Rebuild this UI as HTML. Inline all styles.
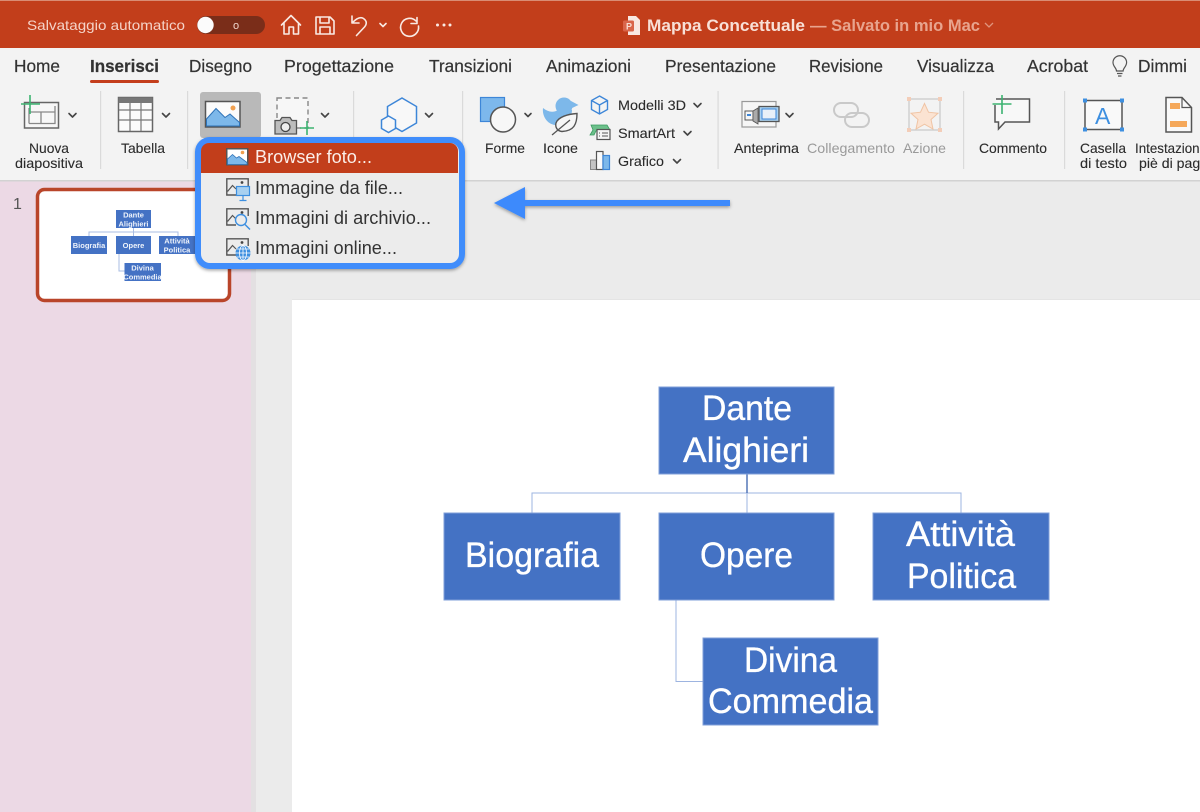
<!DOCTYPE html>
<html lang="it"><head><meta charset="utf-8"><title>Mappa Concettuale</title>
<style>
html,body{margin:0;padding:0;width:1200px;height:812px;overflow:hidden;background:#ebebeb}
svg{display:block;position:absolute;left:0;top:0;filter:blur(.3px)}
text{font-family:"Liberation Sans",sans-serif;fill:#2a2a2a}
.tab{font-size:17.5px;fill:#333;stroke:#333;stroke-width:.2px}
.lb{font-size:13.6px;fill:#2b2b2b;stroke:#2b2b2b;stroke-width:.1px}
.gr{font-size:13.6px;fill:#9a9a9a}
.mn{font-size:18px;fill:#333}
.sl{font-size:35px;fill:#fff;stroke:#fff;stroke-width:.35px}
.th{font-size:7.500px;fill:#eef3fb;font-weight:bold;text-anchor:middle}
.ch{fill:none;stroke:#444;stroke-width:1.600;stroke-linecap:round;stroke-linejoin:round}
.w{fill:none;stroke:#f9e9e3;stroke-width:1.600;stroke-linecap:round;stroke-linejoin:round}
.bl{fill:none;stroke:#3d86d8;stroke-width:1.500}
</style></head><body>
<svg width="1200" height="812" viewBox="0 0 1200 812" xmlns="http://www.w3.org/2000/svg">
<defs>
<filter id="sh" x="-10%" y="-20%" width="120%" height="140%"><feDropShadow dx="0" dy="1.500" stdDeviation="1.500" flood-color="#000" flood-opacity=".35"/></filter>
<g id="pic"><rect x=".75" y=".75" width="21" height="16" fill="#fff" stroke="#555" stroke-width="1.500"/><path d="M1.500 16.500V11l5-4.500 4 3.500 2.500-1.500 8 6v2z" fill="#7db8ea" stroke="#2f73b8" stroke-width=".8"/><circle cx="16.500" cy="4.500" r="1.800" fill="#f0a050"/></g>
<g id="pico"><path d="M10 17H.8V.8h21.400V8" fill="none" stroke="#555" stroke-width="1.400"/><path d="M1.500 13.500l5-6 3.500 3.500" fill="none" stroke="#555" stroke-width="1.200"/><circle cx="16" cy="4.500" r="1.400" fill="#444"/></g>
</defs>

<rect width="1200" height="812" fill="#ebebeb"/>
<rect x="0" y="181" width="251" height="631" fill="#ecd9e5"/>
<rect x="251" y="181" width="5" height="631" fill="#e3e0e2"/>
<rect x="292" y="300" width="908" height="512" fill="#fff"/>
<rect x="292" y="299" width="908" height="1" fill="#e4e4e4"/>

<!-- title bar -->
<rect width="1200" height="48" fill="#c23e1b"/>
<rect width="1200" height="1" fill="#d98c74"/>
<text x="27" y="30" font-size="14" textLength="158" lengthAdjust="spacingAndGlyphs" style="fill:#f5d3c8">Salvataggio automatico</text>
<rect x="197" y="16" width="68" height="18" rx="9" fill="#7a2d19"/>
<circle cx="205.500" cy="25" r="8.200" fill="#fbfbfb"/>
<text x="233" y="29" font-size="11" style="fill:#f0d5cc">o</text>
<path class="w" d="M281.500 25l9.500-9.500 9.500 9.500M284 23v11h5v-7h4.500v7h5V23"/>
<path class="w" d="M316 17h14l4 4v13h-18zM320 17v6h9v-6M320 34v-7h10v7"/>
<path class="w" d="M352 16v7h7M352.500 22.500c4-4 8-6 11-4 3.500 2.500 3.500 5.500 1 8.500l-8 8.500"/>
<path class="w" d="M380 23.500l3 3 3-3"/>
<path class="w" d="M417 17.500v6h-6M416 21a9 9 0 1 0 2.500 5"/>
<circle cx="437.500" cy="25" r="1.500" fill="#f9e9e3"/><circle cx="444" cy="25" r="1.500" fill="#f9e9e3"/><circle cx="450" cy="25" r="1.500" fill="#f9e9e3"/>
<path d="M628 16h8l4 4v15h-12z" fill="#f8e8e2"/>
<rect x="623" y="20.500" width="11" height="11" rx="1.500" fill="#d9654a"/>
<text x="626" y="29.500" font-size="9" font-weight="bold" style="fill:#f8dcd2">P</text>
<text x="647" y="31" font-size="16.500" font-weight="bold" textLength="158" lengthAdjust="spacingAndGlyphs" style="fill:#f8e0d7">Mappa Concettuale</text>
<text x="810" y="31" font-size="16.500" font-weight="bold" textLength="170" lengthAdjust="spacingAndGlyphs" style="fill:#e8a48e">— Salvato in mio Mac</text>
<path d="M985 23l4 4 4-4" fill="none" stroke="#e0947c" stroke-width="1.300"/>

<!-- ribbon -->
<rect y="48" width="1200" height="132" fill="#f3f3f3"/>
<rect y="180" width="1200" height="1.500" fill="#d2d2d2"/>
<text class="tab" x="14" y="72" textLength="46" lengthAdjust="spacingAndGlyphs">Home</text>
<text class="tab" x="90" y="72" font-weight="bold" textLength="69" lengthAdjust="spacingAndGlyphs">Inserisci</text>
<text class="tab" x="189" y="72" textLength="63" lengthAdjust="spacingAndGlyphs">Disegno</text>
<text class="tab" x="284" y="72" textLength="110" lengthAdjust="spacingAndGlyphs">Progettazione</text>
<text class="tab" x="429" y="72" textLength="83" lengthAdjust="spacingAndGlyphs">Transizioni</text>
<text class="tab" x="546" y="72" textLength="85" lengthAdjust="spacingAndGlyphs">Animazioni</text>
<text class="tab" x="665" y="72" textLength="111" lengthAdjust="spacingAndGlyphs">Presentazione</text>
<text class="tab" x="809" y="72" textLength="74" lengthAdjust="spacingAndGlyphs">Revisione</text>
<text class="tab" x="917" y="72" textLength="77" lengthAdjust="spacingAndGlyphs">Visualizza</text>
<text class="tab" x="1027" y="72" textLength="61" lengthAdjust="spacingAndGlyphs">Acrobat</text>
<text class="tab" x="1138" y="72" textLength="49" lengthAdjust="spacingAndGlyphs">Dimmi</text>
<rect x="90" y="80" width="69" height="3" rx="1.500" fill="#c43e1c"/>
<path d="M1116.500 71c0-3-3.500-4.500-3.500-8.500a6.800 6.800 0 0 1 13.600 0c0 4-3.500 5.500-3.500 8.500zM1117 73.500h5.500M1118 76h3.500" fill="none" stroke="#555" stroke-width="1.200"/>

<g fill="#dadada"><rect x="100" y="91" width="1.200" height="78"/><rect x="187" y="91" width="1.200" height="78"/><rect x="353" y="91" width="1.200" height="78"/><rect x="462" y="91" width="1.200" height="78"/><rect x="717.500" y="91" width="1.200" height="78"/><rect x="963" y="91" width="1.200" height="78"/><rect x="1064" y="91" width="1.200" height="78"/></g>

<text class="lb" x="29" y="153" textLength="40" lengthAdjust="spacingAndGlyphs">Nuova</text>
<text class="lb" x="15" y="168" textLength="68" lengthAdjust="spacingAndGlyphs">diapositiva</text>
<text class="lb" x="121" y="153" textLength="44" lengthAdjust="spacingAndGlyphs">Tabella</text>
<text class="lb" x="485" y="153" textLength="40" lengthAdjust="spacingAndGlyphs">Forme</text>
<text class="lb" x="543" y="153" textLength="35" lengthAdjust="spacingAndGlyphs">Icone</text>
<text class="lb" x="618" y="110" textLength="68" lengthAdjust="spacingAndGlyphs">Modelli 3D</text>
<text class="lb" x="618" y="138" textLength="57" lengthAdjust="spacingAndGlyphs">SmartArt</text>
<text class="lb" x="618" y="166" textLength="46" lengthAdjust="spacingAndGlyphs">Grafico</text>
<text class="lb" x="734" y="153" textLength="65" lengthAdjust="spacingAndGlyphs">Anteprima</text>
<text class="gr" x="807" y="153" textLength="88" lengthAdjust="spacingAndGlyphs">Collegamento</text>
<text class="gr" x="903" y="153" textLength="43" lengthAdjust="spacingAndGlyphs">Azione</text>
<text class="lb" x="979" y="153" textLength="68" lengthAdjust="spacingAndGlyphs">Commento</text>
<text class="lb" x="1080" y="153" textLength="46" lengthAdjust="spacingAndGlyphs">Casella</text>
<text class="lb" x="1080" y="168" textLength="47" lengthAdjust="spacingAndGlyphs">di testo</text>
<text class="lb" x="1135" y="153" textLength="72" lengthAdjust="spacingAndGlyphs">Intestazione</text>
<text class="lb" x="1139" y="168" textLength="80" lengthAdjust="spacingAndGlyphs">piè di pagina</text>

<g class="ch">
<path d="M69 113.500l3.500 3.500 3.500-3.500"/><path d="M162.500 113.500l3.500 3.500 3.500-3.500"/><path d="M250 113.500l3.500 3.500 3.500-3.500"/><path d="M321.500 113.500l3.500 3.500 3.500-3.500"/><path d="M425.500 113.500l3.500 3.500 3.500-3.500"/><path d="M525 113.500l3 3 3-3"/><path d="M694 103.500l3.500 3.500 3.500-3.500"/><path d="M684 131.500l3.500 3.500 3.500-3.500"/><path d="M673.500 159.500l3.500 3.500 3.500-3.500"/><path d="M786 113.500l3.500 3.500 3.500-3.500"/>
</g>

<!-- nuova -->
<rect x="24.500" y="102.500" width="34" height="25.500" fill="#f7f7f7" stroke="#666" stroke-width="1.500"/>
<path d="M29 123.500V108M29 123.500h26V106M41 112v11.500M29 112h26" fill="none" stroke="#888" stroke-width="1.300"/>
<path d="M21 104h19M30 95v19" stroke="#3cb371" stroke-width="1.600" fill="none"/>
<!-- tabella -->
<rect x="118.500" y="97.500" width="34" height="34" fill="#fbfbfb" stroke="#666" stroke-width="1.500"/>
<rect x="118.500" y="97.500" width="34" height="5.500" fill="#777"/>
<path d="M130 103v28M141 103v28M119 110h33M119 120h33" stroke="#777" stroke-width="1.200" fill="none"/>
<!-- picture btn -->
<rect x="200" y="92" width="61" height="46" rx="3" fill="#b9b9b9"/>
<rect x="205.500" y="101.500" width="34.500" height="25.500" fill="#fbfbfb" stroke="#555" stroke-width="1.500"/>
<path d="M206.500 126v-7l9.500-10.500 9 9 5-3.500 9.500 8.500v3.500z" fill="#7db8ea" stroke="#2f73b8" stroke-width="1"/>
<circle cx="233" cy="108" r="2.500" fill="#f0a050"/>
<!-- screenshot -->
<rect x="277" y="98" width="31" height="30" fill="#f7f7f7" stroke="#888" stroke-width="1.400" stroke-dasharray="5 3.500"/>
<path d="M275 120.500h5l2-3h8l2 3h4.500V134H275z" fill="#bdbdbd" stroke="#555" stroke-width="1.300"/>
<circle cx="285.500" cy="127" r="4.500" fill="#eee" stroke="#444" stroke-width="1.300"/>
<path d="M300 128h14M307 121v14" stroke="#3cb371" stroke-width="1.600"/>
<!-- hexagons -->
<path d="M402 98l14.500 8.500v16.500L402 131.500 387.500 123v-16.500z" fill="#f8f8f8" stroke="#3d86d8" stroke-width="1.500"/>
<path d="M388.500 116l7 4v8.500l-7 4-7-4V120z" fill="#f8f8f8" stroke="#3d86d8" stroke-width="1.500"/>
<!-- forme -->
<rect x="480.500" y="97.500" width="24" height="24" fill="#7db8ec" stroke="#3d86d8" stroke-width="1.200"/>
<circle cx="503" cy="119.500" r="12.500" fill="#f7f7f7" stroke="#555" stroke-width="1.500"/>
<!-- icone: duck + leaf -->
<circle cx="564" cy="106" r="8.500" fill="#7db8ea"/>
<path d="M571 101l7.500 4-7.500 3.500z" fill="#7db8ea"/>
<path d="M543 108c5 4 10 5 15 2h14c0 10-10 16-17 15-8-1-13-9-12-17z" fill="#7db8ea"/>
<path d="M577 113.500c0 10.500-3 17.500-15 18-5-.5-7-4.500-6-8.500 2-6 12-9 21-9.500z" fill="#f6f6f6" stroke="#555" stroke-width="1.400"/>
<path d="M552 135l18-15" stroke="#555" stroke-width="1.300" fill="none"/>
<!-- modelli 3d -->
<path d="M599.500 96l8 4.500v9l-8 4.500-8-4.500v-9zM591.500 100.500l8 4.500 8-4.500M599.500 105v9" class="bl" style="stroke-width:1.400"/>
<!-- smartart -->
<path d="M591 125h16l3 5-14 1-2 4-4 0 3-5z" fill="#6cc08b" stroke="#3a9a60" stroke-width=".8"/>
<rect x="597" y="129.500" width="13" height="10" fill="#f6f6f6" stroke="#555" stroke-width="1.200"/>
<path d="M599 133h1M602 133h6M599 136h1M602 136h6" stroke="#555" stroke-width="1"/>
<!-- grafico -->
<rect x="590.500" y="160" width="6" height="9.500" fill="#c4c4c4" stroke="#888"/>
<rect x="596.500" y="151.500" width="6.500" height="18" fill="#fafafa" stroke="#555" stroke-width="1.200"/>
<rect x="603" y="155.500" width="6.500" height="14" fill="#7db8ea" stroke="#3d86d8" stroke-width="1.200"/>
<!-- anteprima -->
<rect x="742" y="101.500" width="34" height="25.500" fill="#f6f6f6" stroke="#999" stroke-width="1.200"/>
<rect x="745" y="111" width="8" height="9" fill="#f6f6f6" stroke="#555"/>
<path d="M747 114h4v2h-4z" fill="#3d86d8"/>
<path d="M753 111l5-3v16l-5-3z" fill="#aaa" stroke="#555" stroke-width=".8"/>
<rect x="759" y="106.500" width="20" height="15" fill="#a8d0f0" stroke="#555" stroke-width="1.300"/>
<rect x="762" y="109" width="14" height="10" fill="#e8f0f8" stroke="#3d86d8"/>
<!-- collegamento -->
<g fill="none" stroke="#c9c9c9" stroke-width="2"><rect x="834" y="103" width="24" height="14" rx="7"/><rect x="845" y="113" width="24" height="14" rx="7"/></g>
<!-- azione -->
<rect x="909" y="99" width="31" height="31" fill="none" stroke="#c8c8c8" stroke-width="1.200"/>
<g fill="#f3cdb8"><rect x="907" y="97" width="4" height="4"/><rect x="938" y="97" width="4" height="4"/><rect x="907" y="128" width="4" height="4"/><rect x="938" y="128" width="4" height="4"/></g>
<path d="M924.500 103.500l4 8.700 9.500 1-7 6.300 2 9.500-8.500-4.800-8.500 4.800 2-9.500-7-6.300 9.500-1z" fill="#fbe3d2" stroke="#f0c4a4" stroke-width="1"/>
<!-- commento -->
<path d="M996 99h33.500v23H1005l-6.500 7v-7H995V105" fill="#f8f8f8" stroke="#555" stroke-width="1.500"/>
<path d="M992.500 104h19M1002 95v19" stroke="#3cb371" stroke-width="1.600" fill="none"/>
<!-- casella -->
<rect x="1085" y="100.500" width="37" height="29" fill="#f9f9f9" stroke="#555" stroke-width="1.500"/>
<g fill="#3d8fe0"><rect x="1083" y="98.500" width="4" height="4"/><rect x="1120" y="98.500" width="4" height="4"/><rect x="1083" y="127.500" width="4" height="4"/><rect x="1120" y="127.500" width="4" height="4"/></g>
<text x="1095" y="124" font-size="23" style="fill:#3d8fe0">A</text>
<!-- intestazione -->
<path d="M1166 97.500h16l9.500 10v24.500H1166z" fill="#f9f9f9" stroke="#555" stroke-width="1.500"/>
<path d="M1182 97.500v10h9.500" fill="none" stroke="#555" stroke-width="1.200"/>
<rect x="1170" y="103" width="10" height="6" fill="#f5a85a"/><rect x="1170" y="121" width="17" height="6" fill="#f5a85a"/>

<!-- thumbnail -->
<text x="13" y="209" font-size="16" style="fill:#555">1</text>
<rect x="37.500" y="189.500" width="192" height="111" rx="7" fill="#fff" stroke="#b9452a" stroke-width="3.500"/>
<path d="M133.500 228v8M89 236v-4h89v4M119 254v17h6" fill="none" stroke="#a9bde3" stroke-width="1"/>
<g fill="#4472c4"><rect x="116" y="210" width="35" height="18"/><rect x="71" y="236" width="36" height="18"/><rect x="116" y="236" width="35" height="18"/><rect x="159" y="236" width="36" height="18"/><rect x="124.500" y="263" width="36.500" height="18"/></g>
<text class="th" x="133.500" y="217.500">Dante</text><text class="th" x="133.500" y="226.500">Alighieri</text>
<text class="th" x="89" y="248">Biografia</text><text class="th" x="133.500" y="248">Opere</text>
<text class="th" x="177" y="243.500">Attività</text><text class="th" x="177" y="252.500">Politica</text>
<text class="th" x="142.500" y="270.500">Divina</text><text class="th" x="142.500" y="279.500">Commedia</text>

<!-- dropdown -->
<rect x="198" y="140" width="264" height="126" rx="12" fill="#ececec" stroke="#3f8dfb" stroke-width="6" filter="url(#sh)"/>
<path d="M201 173v-22a8 8 0 0 1 8-8h241a8 8 0 0 1 8 8v22z" fill="#c23e1b"/>
<text class="mn" x="255" y="163" textLength="117" lengthAdjust="spacingAndGlyphs" style="fill:#fbeee9">Browser foto...</text>
<text class="mn" x="255" y="194" textLength="148" lengthAdjust="spacingAndGlyphs">Immagine da file...</text>
<text class="mn" x="255" y="224" textLength="176" lengthAdjust="spacingAndGlyphs">Immagini di archivio...</text>
<text class="mn" x="255" y="254" textLength="142" lengthAdjust="spacingAndGlyphs">Immagini online...</text>
<use href="#pic" x="226" y="148"/>
<use href="#pico" x="226" y="178"/>
<rect x="236.500" y="186.500" width="13" height="9" fill="#a8d0f0" stroke="#3d8fe0" stroke-width="1.200"/><path d="M243 196v4M239.500 200.500h7" stroke="#3d8fe0" stroke-width="1.200"/>
<use href="#pico" x="226" y="208"/>
<circle cx="241" cy="220" r="5.500" fill="#ececec" stroke="#3d8fe0" stroke-width="1.400"/><path d="M245 224.500l5 5" stroke="#3d8fe0" stroke-width="1.500"/>
<use href="#pico" x="226" y="238"/>
<circle cx="243" cy="253" r="7.500" fill="#3d8fe0"/><path d="M235.500 253h15M243 245.500v15M237 249h12M237 257h12" stroke="#fff" stroke-width=".8"/><ellipse cx="243" cy="253" rx="3.500" ry="7.500" fill="none" stroke="#fff" stroke-width=".8"/>

<!-- arrow -->
<path d="M494 203l31-16v13h205v6H525v13z" fill="#3c8afc" filter="url(#sh)"/>

<!-- slide diagram -->
<path d="M747 493H532v20M747 493h214v20M747 493v20M676 600v81.500h27" fill="none" stroke="#9db4e0" stroke-width="1"/>
<path d="M747 474v19" stroke="#3a62ad" stroke-width="1.300"/>
<g fill="#4472c4" stroke="#7f9fd8" stroke-width="1">
<rect x="659" y="387" width="175" height="87"/>
<rect x="444" y="513" width="176" height="87"/>
<rect x="659" y="513" width="175" height="87"/>
<rect x="873" y="513" width="176" height="87"/>
<rect x="703" y="638" width="175" height="87"/>
</g>
<text class="sl" x="702" y="420" textLength="90" lengthAdjust="spacingAndGlyphs">Dante</text>
<text class="sl" x="683" y="462" textLength="126" lengthAdjust="spacingAndGlyphs">Alighieri</text>
<text class="sl" x="465" y="567" textLength="134" lengthAdjust="spacingAndGlyphs">Biografia</text>
<text class="sl" x="700" y="567" textLength="93" lengthAdjust="spacingAndGlyphs">Opere</text>
<text class="sl" x="906" y="546" textLength="109" lengthAdjust="spacingAndGlyphs">Attività</text>
<text class="sl" x="907" y="588" textLength="109" lengthAdjust="spacingAndGlyphs">Politica</text>
<text class="sl" x="744" y="672" textLength="93" lengthAdjust="spacingAndGlyphs">Divina</text>
<text class="sl" x="708" y="713" textLength="165" lengthAdjust="spacingAndGlyphs">Commedia</text>
</svg>
</body></html>
